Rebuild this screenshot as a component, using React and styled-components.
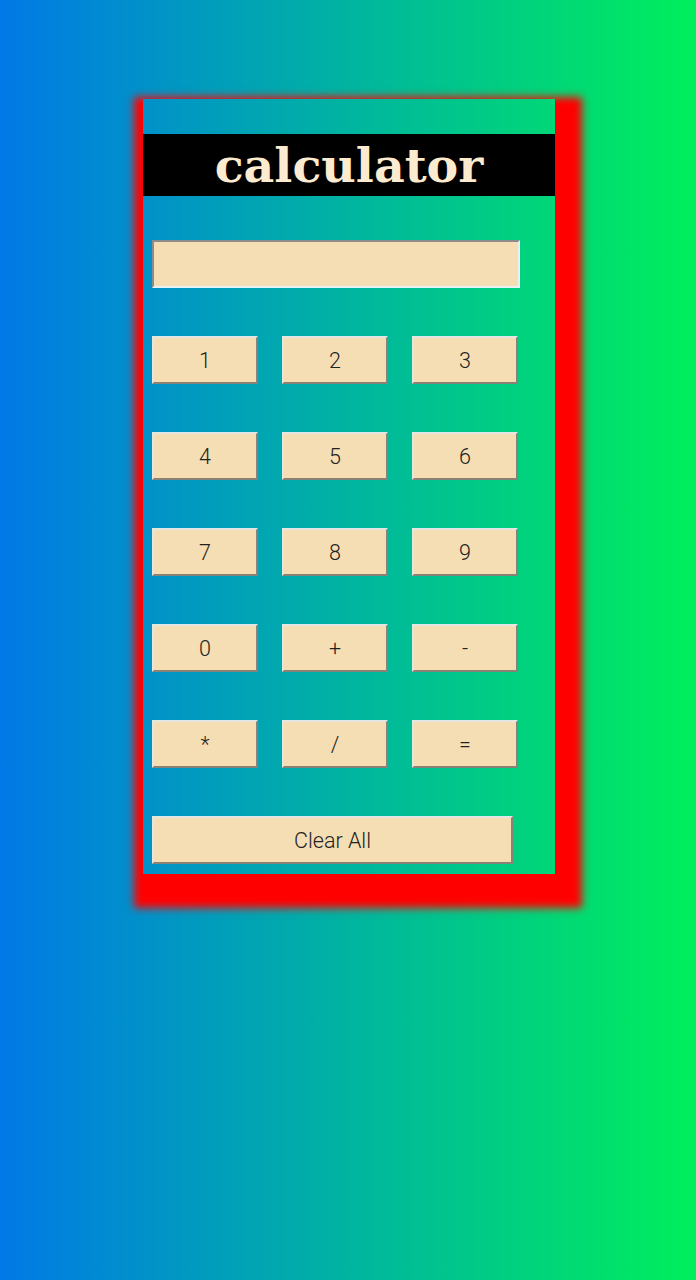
import React from "react";
import styled, { createGlobalStyle } from "styled-components";

const GlobalStyle = createGlobalStyle`
  html, body {
    margin: 0;
    padding: 0;
  }
  body {
    min-height: 1280px;
    background: linear-gradient(to right, #0179e6, #00ef5b);
    font-family: Roboto, "Noto Sans", sans-serif;
  }
`;

const Calculator = styled.div`
  width: 412px;
  margin: 99px 0 0 calc(50% - 205px);
  padding: 35px 0 10px;
  box-sizing: border-box;
  box-shadow: 9px 16px 8px 18px #ff0000;
`;

const Title = styled.h1`
  margin: 0;
  height: 62px;
  background: #000;
  color: #fdebcf;
  font-family: "DejaVu Serif", "Liberation Serif", serif;
  font-weight: bold;
  font-size: 47.5px;
  line-height: 62px;
  text-align: center;
`;

const Body = styled.div`
  padding: 44px 0 0 9px;
  display: flex;
  flex-direction: column;
  gap: 48px;
`;

const Display = styled.input`
  width: 368px;
  height: 48px;
  box-sizing: border-box;
  background: #f5deb3;
  border: 2px solid;
  border-color: #8c8c8c #e6f2f5 #e6f2f5 #8c8c8c;
  outline: none;
  padding: 0 8px;
  font-family: Roboto, sans-serif;
  font-size: 20px;
`;

const Keys = styled.div`
  display: grid;
  grid-template-columns: repeat(3, 106px);
  column-gap: 24px;
  row-gap: 48px;
`;

const Key = styled.button`
  width: ${(p) => (p.$wide ? "361px" : "106px")};
  height: 48px;
  box-sizing: border-box;
  background: #f5deb3;
  border: 2px solid;
  border-color: #e4e6e2 #8a8177 #8a8177 #e4e6e2;
  color: #222;
  font-family: Roboto, sans-serif;
  font-weight: 300;
  font-size: 21.5px;
  padding: 0;
  cursor: pointer;
`;

const keys = ["1", "2", "3", "4", "5", "6", "7", "8", "9", "0", "+", "-", "*", "/", "="];

export default function App() {
  return (
    <>
      <GlobalStyle />
      <Calculator>
        <Title>calculator</Title>
        <Body>
          <Display type="text" readOnly />
          <Keys>
            {keys.map((k) => (
              <Key key={k}>{k}</Key>
            ))}
          </Keys>
          <Key $wide>Clear All</Key>
        </Body>
      </Calculator>
    </>
  );
}
